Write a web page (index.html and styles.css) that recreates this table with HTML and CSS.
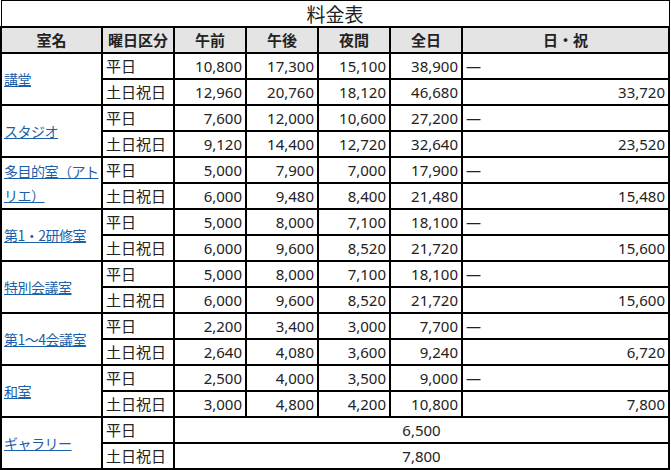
FILE: index.html
```html
<!DOCTYPE html>
<html lang="ja">
<head>
<meta charset="utf-8">
<title>料金表</title>
<link rel="stylesheet" href="styles.css">
</head>
<body>
<table class="fee">
  <colgroup>
    <col class="c-room"><col class="c-day"><col class="c-num"><col class="c-num"><col class="c-num"><col class="c-num"><col class="c-hol">
  </colgroup>
  <tr><th class="title" colspan="7">料金表</th></tr>
  <tr class="head"><th>室名</th><th>曜日区分</th><th>午前</th><th>午後</th><th>夜間</th><th>全日</th><th>日・祝</th></tr>

  <tr><td class="room" rowspan="2"><a href="#">講堂</a></td><td class="day">平日</td><td class="n">10,800</td><td class="n">17,300</td><td class="n">15,100</td><td class="n">38,900</td><td class="dash">—</td></tr>
  <tr><td class="day">土日祝日</td><td class="n">12,960</td><td class="n">20,760</td><td class="n">18,120</td><td class="n">46,680</td><td class="n">33,720</td></tr>

  <tr><td class="room" rowspan="2"><a href="#">スタジオ</a></td><td class="day">平日</td><td class="n">7,600</td><td class="n">12,000</td><td class="n">10,600</td><td class="n">27,200</td><td class="dash">—</td></tr>
  <tr><td class="day">土日祝日</td><td class="n">9,120</td><td class="n">14,400</td><td class="n">12,720</td><td class="n">32,640</td><td class="n">23,520</td></tr>

  <tr><td class="room" rowspan="2"><a href="#">多目的室（アトリエ）</a></td><td class="day">平日</td><td class="n">5,000</td><td class="n">7,900</td><td class="n">7,000</td><td class="n">17,900</td><td class="dash">—</td></tr>
  <tr><td class="day">土日祝日</td><td class="n">6,000</td><td class="n">9,480</td><td class="n">8,400</td><td class="n">21,480</td><td class="n">15,480</td></tr>

  <tr><td class="room" rowspan="2"><a href="#">第1・2研修室</a></td><td class="day">平日</td><td class="n">5,000</td><td class="n">8,000</td><td class="n">7,100</td><td class="n">18,100</td><td class="dash">—</td></tr>
  <tr><td class="day">土日祝日</td><td class="n">6,000</td><td class="n">9,600</td><td class="n">8,520</td><td class="n">21,720</td><td class="n">15,600</td></tr>

  <tr><td class="room" rowspan="2"><a href="#">特別会議室</a></td><td class="day">平日</td><td class="n">5,000</td><td class="n">8,000</td><td class="n">7,100</td><td class="n">18,100</td><td class="dash">—</td></tr>
  <tr><td class="day">土日祝日</td><td class="n">6,000</td><td class="n">9,600</td><td class="n">8,520</td><td class="n">21,720</td><td class="n">15,600</td></tr>

  <tr><td class="room" rowspan="2"><a href="#">第1～4会議室</a></td><td class="day">平日</td><td class="n">2,200</td><td class="n">3,400</td><td class="n">3,000</td><td class="n">7,700</td><td class="dash">—</td></tr>
  <tr><td class="day">土日祝日</td><td class="n">2,640</td><td class="n">4,080</td><td class="n">3,600</td><td class="n">9,240</td><td class="n">6,720</td></tr>

  <tr><td class="room" rowspan="2"><a href="#">和室</a></td><td class="day">平日</td><td class="n">2,500</td><td class="n">4,000</td><td class="n">3,500</td><td class="n">9,000</td><td class="dash">—</td></tr>
  <tr><td class="day">土日祝日</td><td class="n">3,000</td><td class="n">4,800</td><td class="n">4,200</td><td class="n">10,800</td><td class="n">7,800</td></tr>

  <tr><td class="room" rowspan="2"><a href="#">ギャラリー</a></td><td class="day">平日</td><td class="span" colspan="5">6,500</td></tr>
  <tr><td class="day">土日祝日</td><td class="span" colspan="5">7,800</td></tr>
</table>
</body>
</html>
```

FILE: styles.css
```css
html, body {
  margin: 0;
  padding: 0;
  background: #ffffff;
}

.fee {
  border-collapse: collapse;
  table-layout: fixed;
  width: 670px;
  font-family: "Noto Sans", "Noto Sans CJK JP", sans-serif;
  font-size: 15px;
  color: #222222;
}

.c-room { width: 101px; }
.c-day { width: 72px; }
.c-num { width: 72px; }
.c-hol { width: 207px; }

.fee th,
.fee td {
  border: 2px solid #000000;
  height: 26px;
  padding: 0 3px;
  line-height: 20px;
  box-sizing: border-box;
  white-space: nowrap;
}

.fee .title {
  border: 1px solid #000000;
  border-bottom: 2px solid #000000;
  padding-top: 1px;
  font-weight: normal;
  font-size: 19px;
  line-height: 22px;
  background: #ffffff;
  text-align: center;
  color: #222222;
  font-family: "Noto Sans CJK JP", sans-serif;
}

.head th {
  background: #e4e4e4;
  font-weight: bold;
  text-align: center;
  font-family: "Noto Sans CJK JP", sans-serif;
}

.fee td.room {
  white-space: normal;
  padding: 0 2px;
  font-family: "Noto Sans CJK JP", sans-serif;
  font-size: 14px;
  line-height: 24px;
  letter-spacing: -0.5px;
}

.room a {
  color: #1b5fa8;
  text-decoration: underline;
}

.day {
  font-family: "Noto Sans CJK JP", sans-serif;
  text-align: left;
}

.n {
  text-align: right;
}

.dash {
  text-align: left;
  padding-left: 5px;
}

.span {
  text-align: center;
}
```
